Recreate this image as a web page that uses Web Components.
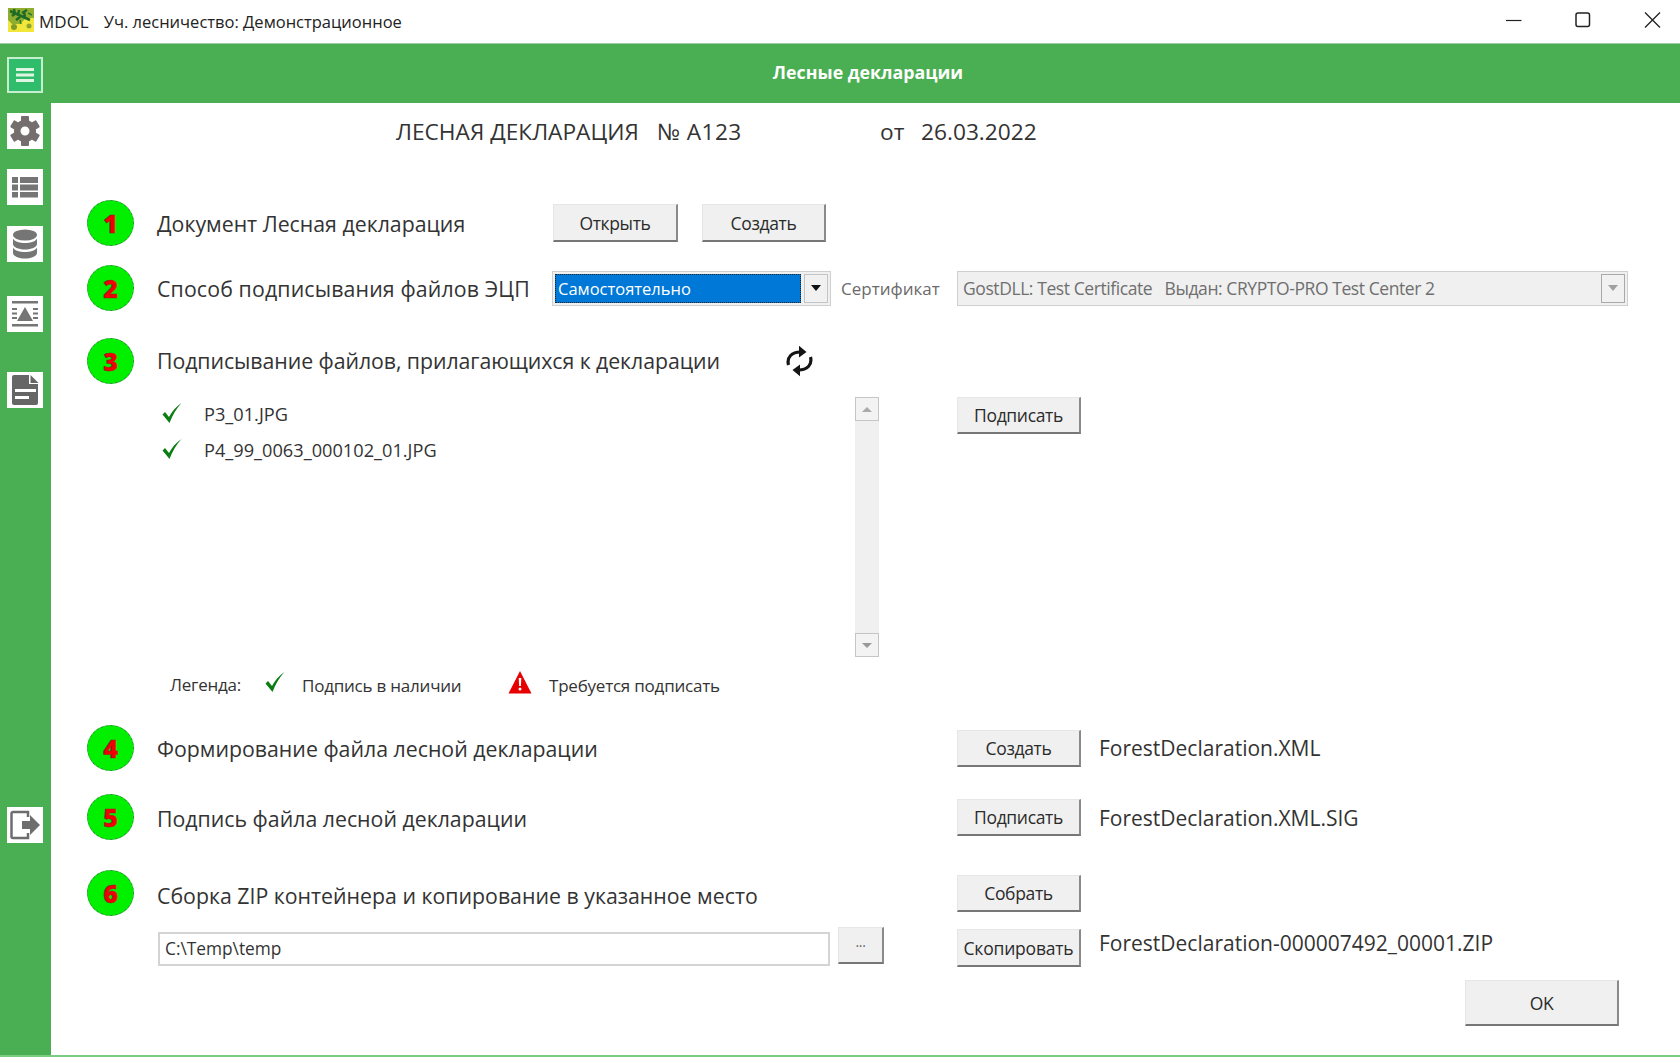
<!DOCTYPE html>
<html lang="ru"><head><meta charset="utf-8"><title>MDOL</title>
<style>
html,body{margin:0;height:100%;background:#fff}
body{font-family:"Open Sans","Noto Sans",sans-serif;color:#2f2f2f;overflow:hidden}
</style></head><body>
<app-window>
  <title-bar slot="title"></title-bar>
  <side-bar slot="side"></side-bar>
  <top-header slot="header">Лесные декларации</top-header>
  <decl-heading style="height:59px"></decl-heading>

  <form-row style="height:46px;margin-top:38px">
    <step-badge slot="badge">1</step-badge>
    <span slot="label">Документ Лесная декларация</span>
    <flat-button slot="mid" w="125" h="38" style="margin-left:1px">Открыть</flat-button>
    <flat-button slot="mid" w="124" h="38" style="margin-left:24px">Создать</flat-button>
  </form-row>

  <form-row style="height:46px;margin-top:19px">
    <step-badge slot="badge">2</step-badge>
    <span slot="label" style="letter-spacing:.14px">Способ подписывания файлов ЭЦП</span>
    <combo-box slot="mid" selected style="width:279px">Самостоятельно</combo-box>
    <small-text slot="mid" tone="muted" style="margin-left:10px;width:116px">Сертификат</small-text>
    <combo-box slot="action" disabled style="width:671px">GostDLL: Test Certificate&nbsp;&nbsp; Выдан: CRYPTO-PRO Test Center 2</combo-box>
  </form-row>

  <form-row style="height:46px;margin-top:27px">
    <step-badge slot="badge">3</step-badge>
    <span slot="label" style="letter-spacing:-.07px;position:relative;top:-1px">Подписывание файлов, прилагающихся к декларации</span>
    <sync-icon slot="mid" style="margin-left:234px"></sync-icon>
  </form-row>

  <files-panel style="margin-top:13px">
    <file-item>P3_01.JPG</file-item>
    <file-item>P4_99_0063_000102_01.JPG</file-item>
    <flat-button slot="action" w="124" h="37">Подписать</flat-button>
  </files-panel>

  <legend-row style="margin-top:14px"></legend-row>

  <form-row style="height:46px;margin-top:26px">
    <step-badge slot="badge">4</step-badge>
    <span slot="label">Формирование файла лесной декларации</span>
    <flat-button slot="action" w="124" h="37">Создать</flat-button>
    <file-name slot="action">ForestDeclaration.XML</file-name>
  </form-row>

  <form-row style="height:46px;margin-top:23px">
    <step-badge slot="badge">5</step-badge>
    <span slot="label" style="position:relative;top:1px">Подпись файла лесной декларации</span>
    <flat-button slot="action" w="124" h="37">Подписать</flat-button>
    <file-name slot="action" style="position:relative;top:1px">ForestDeclaration.XML.SIG</file-name>
  </form-row>

  <form-row style="height:46px;margin-top:30px">
    <step-badge slot="badge">6</step-badge>
    <span slot="label" style="position:relative;top:2px">Сборка ZIP контейнера и копирование в указанное место</span>
    <flat-button slot="action" w="124" h="37">Собрать</flat-button>
  </form-row>

  <form-row style="height:40px;margin-top:12px">
    <text-field slot="wide" style="width:672px">C:\Temp\temp</text-field>
    <flat-button slot="wide" w="46" h="37" style="margin:-5px 0 0 8px"><span style="font-size:14px;position:relative;top:-4px;color:#666">...</span></flat-button>
    <flat-button slot="action" w="124" h="38" style="letter-spacing:-.2px">Скопировать</flat-button>
    <file-name slot="action" style="position:relative;top:-5px">ForestDeclaration-000007492_00001.ZIP</file-name>
  </form-row>

  <ok-row style="margin-top:12px"><flat-button w="154" h="46">OK</flat-button></ok-row>
</app-window>

<script>
function def(name, css, html, extra){
  customElements.define(name, class extends HTMLElement{
    constructor(){super();const r=this.attachShadow({mode:'open'});
      r.innerHTML='<style>'+css+'</style>'+html;}
    connectedCallback(){ if(extra) extra(this); }
  });
}
const CHECK='<svg width="22" height="22" viewBox="0 0 22 22"><path d="M1.5 12.5 L4 10 L8 15 C11 9.5 15 4.5 20.5 1 C15.5 6.5 11.500 13 8.500 21 Z" fill="#0b7d12"/></svg>';
const TEETH=[0,60,120,180,240,300].map(a=>`<rect x="12" y="1" width="8" height="8" rx="1" transform="rotate(${a} 16 16)"/>`).join('');

def('app-window',`:host{display:grid;grid-template-columns:51px 1fr;grid-template-rows:44px 59px 1fr;width:1680px;height:1057px;box-sizing:border-box;border-bottom:2px solid #7ccb83}
.t{grid-column:1/-1}.s{grid-row:2/4}.m{display:flex;flex-direction:column;min-width:0;background:#fff}`,
`<div class="t"><slot name="title"></slot></div><div class="s"><slot name="side"></slot></div><slot name="header"></slot><div class="m"><slot></slot></div>`);

def('title-bar',`:host{display:flex;align-items:center;height:44px;box-sizing:border-box;background:#fff;border-bottom:1px solid #9fc8a4;font-size:17px;color:#222;padding-left:8px;white-space:pre}
.i{width:26px;height:24px;margin-right:5px;margin-top:-4px;display:block}
.n{font-size:16.500px;margin-left:15px}
span{margin-top:0}
.c{display:flex;align-items:center;margin-left:auto;margin-right:19px;margin-top:-3px;gap:53px}
.x{display:block}`,
`<svg class="i" viewBox="0 0 26 24"><rect width="26" height="24" fill="#f3e63a"/><path d="M0 0h26v10H18L12 16H4L0 12Z" fill="#8fae2f"/><path d="M2 3 L22 12 M6 1l1 5M11 2l-1 6M16 4l1 5M8 12l4-3M14 5l5-3M4 8l4-3" stroke="#1d6b24" stroke-width="2.500" fill="none"/><circle cx="6" cy="19" r="3" fill="#7f9b2c"/><circle cx="21" cy="18" r="2.500" fill="#8aa531"/><path d="M20 5l4 2M12 12l1 4" stroke="#2c7c2c" stroke-width="1.500"/></svg><span>MDOL</span><span class="n">Уч. лесничество: Демонстрационное</span>
<div class="c"><svg class="x" width="16" height="16" viewBox="0 0 16 16"><path d="M0 8.500H15.500" stroke="#222" stroke-width="1.200"/></svg>
<svg class="x" width="16" height="16" viewBox="0 0 16 16"><rect x="1" y="1" width="13.500" height="13.500" rx="2" fill="none" stroke="#222" stroke-width="1.500"/></svg>
<svg class="x" width="17" height="16" viewBox="0 0 17 16"><path d="M1 .5 16 15.500M16 .5 1 15.500" stroke="#222" stroke-width="1.300"/></svg></div>`);

def('side-bar',`:host{display:flex;flex-direction:column;align-items:flex-start;height:1011px;box-sizing:border-box;background:#4aae52;padding:13px 0 0 7px}
.b{display:flex;width:36px;height:36px;background:#fff;align-items:center;justify-content:center;flex:none}
.b svg{display:block}
.menu{background:#2fbd6c;border:2px solid #c5efcf;box-sizing:border-box}`,
`<div class="b menu"><svg width="20" height="18" viewBox="0 0 20 18"><path d="M1 3.500H19M1 9H19M1 14.500H19" stroke="#dff5e4" stroke-width="3"/></svg></div>
<div class="b" style="margin-top:20px"><svg width="32" height="32" viewBox="0 0 32 32"><g fill="#756e6e">${TEETH}</g><path fill="#756e6e" fill-rule="evenodd" d="M16 5a11 11 0 1 0 0 22 11 11 0 0 0 0-22ZM16 11.500a4.500 4.500 0 1 1 0 9 4.500 4.500 0 0 1 0-9Z"/></svg></div>
<div class="b" style="margin-top:20px"><svg width="28" height="24" viewBox="0 0 28 24"><path fill="#757575" d="M1 2h6v6H1zM9 2h18v6H9zM1 9.500h6v6H1zM9 9.500h18v6H9zM1 17h6v5.500H1zM9 17h18v5.500H9z"/></svg></div>
<div class="b" style="margin-top:21px"><svg width="26" height="30" viewBox="0 0 26 30"><ellipse cx="13" cy="6" rx="12" ry="5.500" fill="#757575"/><path fill="#757575" d="M1 9.500c2 3.500 7 4.500 12 4.500s10-1 12-4.500V15c0 3-5.500 5.500-12 5.500S1 18 1 15ZM1 18.500c2 3.500 7 4.500 12 4.500s10-1 12-4.500V24c0 3-5.500 5.500-12 5.500S1 27 1 24Z"/></svg></div>
<div class="b" style="margin-top:34px"><svg width="30" height="30" viewBox="0 0 30 30"><path fill="#757575" d="M2 2h26v2.500H2zM2 25h26v2.500H2zM15 8l8 14H7zM2 9h5v2H2zM2 13.500h5v2H2zM2 18h5v2H2zM23 9h5v2h-5zM23 13.500h5v2h-5zM23 18h5v2h-5z"/></svg></div>
<div class="b" style="margin-top:40px"><svg width="30" height="32" viewBox="0 0 30 32"><path fill="#666" fill-rule="evenodd" d="M3 3a2 2 0 0 1 2-2h15v9h9v19a2 2 0 0 1-2 2H5a2 2 0 0 1-2-2ZM6 15v3h21v-3ZM6 22v3h14v-3Z" transform="translate(-1 0)"/><path fill="#666" d="M21 1l8 8h-8z" transform="translate(-.5 0)"/></svg></div>
<div class="b" style="margin-top:399px"><svg width="32" height="32" viewBox="0 0 32 32"><path d="M19 8V3H4a1.500 1.500 0 0 0-1.500 1.500v23A1.500 1.500 0 0 0 4 29h15v-5" fill="none" stroke="#6d6d6d" stroke-width="2.500"/><path fill="#6d6d6d" d="M13 12h8V6l10 10-10 10v-6h-8z"/></svg></div>`);

def('top-header',`:host{display:flex;align-items:center;justify-content:center;height:59px;background:#4aae52;color:#fff;font-weight:700;font-size:17.800px;padding-left:5px;box-sizing:border-box;padding-bottom:3px}`,`<slot></slot>`);

def('decl-heading',`:host{display:block;font-size:22.700px;color:#333;padding-left:345px;padding-top:13px;box-sizing:border-box;white-space:nowrap}
.row{display:flex}.a{width:261px}.b{width:223px;letter-spacing:.4px}.c{width:41px}`,
`<div class="row"><span class="a">ЛЕСНАЯ ДЕКЛАРАЦИЯ</span><span class="b">№ А123</span><span class="c">от</span><span>26.03.2022</span></div>`);

def('form-row',`:host{display:grid;grid-template-columns:36px 70px 395px 405px 1fr;align-items:center;font-size:21.300px;white-space:nowrap;flex:none;color:#333}
.badge{grid-column:2}.label{grid-column:3}.mid{grid-column:4;display:flex;align-items:center}.action{grid-column:5;display:flex;align-items:center;gap:18px}
.wide{grid-column:3/5;grid-row:1;display:flex;align-items:center;margin-left:1px}
.badge,.label,.mid,.action{grid-row:1}`,
`<div class="badge"><slot name="badge"></slot></div><div class="label"><slot name="label"></slot></div><div class="mid"><slot name="mid"></slot></div><div class="wide"><slot name="wide"></slot></div><div class="action"><slot name="action"></slot></div>`);

def('step-badge',`:host{display:flex;width:47px;height:46px;box-sizing:border-box;border-radius:50%;background:#00f000;border:1.500px dashed #2d8a3a;align-items:center;justify-content:center;color:#f00000;font-weight:800;font-size:25px;line-height:1;-webkit-text-stroke:.5px #8a2020}`,`<slot></slot>`);

def('flat-button',`:host{display:inline-flex;align-items:center;justify-content:center;box-sizing:border-box;flex:none;background:#f0f0f0;border:1px solid #e6e6e6;border-right:2px solid #8a8a8a;border-bottom:2px solid #777;font:17.500px "Open Sans",sans-serif;letter-spacing:-.35px;color:#2b2b2b;white-space:nowrap}`,
`<slot></slot>`,el=>{el.style.width=el.getAttribute('w')+'px';el.style.height=el.getAttribute('h')+'px';});

def('combo-box',`:host{display:flex;align-items:center;height:35px;box-sizing:border-box;border:1px solid #cfcfcf;background:#f0f0f0;font:16.500px "Open Sans",sans-serif;padding:2px;flex:none}
.v{flex:1;height:100%;display:flex;align-items:center;box-sizing:border-box;padding-left:3px;white-space:nowrap;overflow:hidden}
:host([selected]) .v{background:#0078d7;color:#fff;outline:1px dotted #222;outline-offset:-1px;margin-right:3px}
:host([disabled]) .v{color:#6f6f6f;font-size:17.500px;letter-spacing:-.42px}
.a{width:24px;height:100%;box-sizing:border-box;border:1px solid #c4c4c4;background:#f1f1f1;display:flex;align-items:center;justify-content:center}
:host([disabled]) .a{border-color:#a9a9a9}
.a i{display:block;width:0;height:0;border:5px solid transparent;border-bottom:0;border-top:6px solid #111}
:host([disabled]) .a i{border-top-color:#a0a0a0}`,
`<div class="v"><slot></slot></div><div class="a"><i></i></div>`);

def('small-text',`:host{display:inline-block;font-size:17px;flex:none}:host([tone=muted]){color:#6a6a6a}`,`<slot></slot>`);

def('sync-icon',`:host{display:block;width:27px;height:32px}svg{display:block}`,
`<svg width="27" height="32" viewBox="0 0 27 32"><g fill="none" stroke="#151515" stroke-width="3.200"><path d="M2.500 20C.5 12 6 7 14.500 7"/><path d="M24.500 12C26.500 20 21 25 12.500 25"/></g><path fill="#151515" d="M13 .8 20.500 7 13 12.500ZM14 19.500 6.500 25 14 31.200Z"/></svg>`);

def('file-item',`:host{display:flex;align-items:center;height:36px;font-size:18.200px;color:#333;white-space:nowrap;position:relative;top:-1px}
.c{width:22px;height:22px;margin-right:21px;margin-top:-3px}`,`<div class="c">${CHECK}</div><slot></slot>`);

def('files-panel',`:host{display:grid;grid-template-columns:36px 74px 694px 24px 78px 1fr;height:260px;flex:none}
.list{grid-column:3}
.sb{grid-column:4;display:flex;flex-direction:column;background:#f0f0f0}
.t{height:24px;box-sizing:border-box;border:1px solid #c5c5c5;background:#f3f3f3;display:flex;align-items:center;justify-content:center}
.sb .g{flex:1}
.u{width:0;height:0;border:5px solid transparent;border-top:0;border-bottom:5px solid #aaa}
.d{width:0;height:0;border:5px solid transparent;border-bottom:0;border-top:5px solid #999}
.act{grid-column:6}`,
`<div class="list"><slot></slot></div><div class="sb"><div class="t"><div class="u"></div></div><div class="g"></div><div class="t"><div class="d"></div></div></div><div class="act"><slot name="action"></slot></div>`);

def('legend-row',`:host{display:flex;align-items:center;height:28px;font-size:17px;color:#333;padding-left:119px;white-space:nowrap;flex:none;letter-spacing:-.22px}
svg{display:block;flex:none}`,
`<span style="width:94px;margin-top:-2px">Легенда:</span><span style="margin-top:-6px">${CHECK}</span><span style="margin-left:16px;width:206px">Подпись в наличии</span>
<svg width="24" height="24" viewBox="0 0 24 24" style="margin-top:-6px"><path fill="#e60000" d="M12 1 23.500 23.500H.5Z"/><path fill="#fff" d="M10.700 8h2.600l-.4 8h-1.800Z"/><circle cx="12" cy="19" r="1.500" fill="#fff"/></svg><span style="margin-left:17px">Требуется подписать</span>`);

def('file-name',`:host{display:inline-block;font-size:21px;color:#333;white-space:nowrap}`,`<slot></slot>`);

def('text-field',`:host{display:flex;align-items:center;height:34px;box-sizing:border-box;border:2px solid #d4d4d4;background:#fff;font-size:17.300px;color:#333;padding-left:5px;flex:none;margin-top:1px}`,`<slot></slot>`);

def('ok-row',`:host{display:flex;justify-content:flex-end;padding-right:61px;flex:none}`,`<slot></slot>`);
</script>
</body></html>
